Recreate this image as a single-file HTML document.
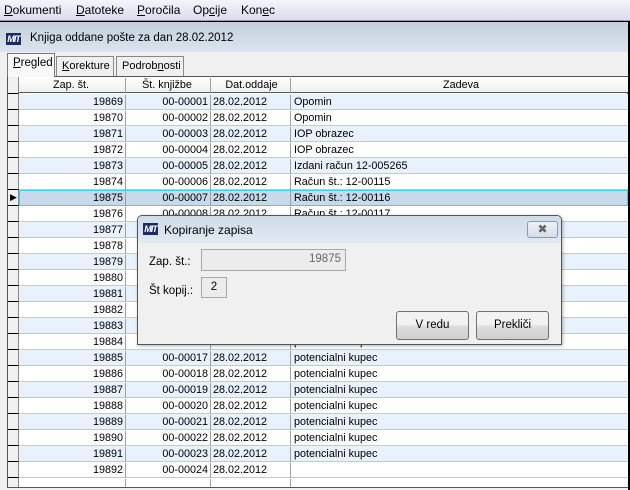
<!DOCTYPE html>
<html><head><meta charset="utf-8"><style>
*{margin:0;padding:0;box-sizing:border-box}
body{width:630px;height:490px;overflow:hidden;background:#000;font-family:"Liberation Sans",sans-serif;font-size:12px;position:relative}
.a{position:absolute}
#menu{left:0;top:0;width:630px;height:21px;background:linear-gradient(#f4f4fb,#dcdcee);border-bottom:1px solid #9a9aaa;color:#000;font-size:12px}
#menu span{position:absolute;top:3px}
#title{left:0;top:22px;width:628px;height:30px;background:linear-gradient(#c2cfdc,#dbe4ee);font-size:11.5px}
#tabs{left:0;top:52px;width:628px;height:438px;background:#f0f0f0}
.tab{position:absolute;height:20px;border:1px solid #888;border-bottom:none;background:#f0f0f0;font-size:11px;padding:3px 5px 0}
.logo{position:absolute;background:#1a2a6a;color:#fff;font-weight:bold;font-style:italic;font-size:9px;line-height:12px;text-align:center;letter-spacing:-1px}
#grid{left:7px;top:76px;width:621px;height:412px;background:#fff;border:1px solid #555}
.row{position:absolute;left:11px;width:609px;height:16px;border-bottom:1px solid #c8c8c8;font-size:10.8px}
.row div{position:absolute;top:1px;height:15px;border-right:1px solid #a0a0a0;white-space:nowrap;line-height:14px}
.c1{left:0;width:107px;text-align:right;padding-right:2px}
.c2{left:107px;width:85px;text-align:right;padding-right:2px}
.c3{left:192px;width:80px;padding-left:2px}
.c4{left:272px;width:337px;padding-left:3px;border-right:none!important}
.ind{position:absolute;left:0;width:11px;height:16px;background:#f0f0f0;border-right:1px solid #888;border-bottom:1px solid #000}
#dlg{left:137px;top:215px;width:425px;height:130px;background:#f0f0f0;border:1px solid #555;border-radius:5px 5px 0 0;box-shadow:1px 1px 3px rgba(0,0,0,.3)}
#dt{left:0;top:0;width:423px;height:27px;background:linear-gradient(#cfdbe8,#e2e9f2);border-radius:4px 4px 0 0;font-size:12px}
.btn{position:absolute;border:1px solid #707070;border-radius:3px;background:linear-gradient(#f2f2f2 45%,#dcdcdc 55%,#cfcfcf);text-align:center;font-size:11.5px;line-height:27px}
</style></head><body>
<div id="menu" class="a"><span style="left:4px"><u>D</u>okumenti</span><span style="left:76px"><u>D</u>atoteke</span><span style="left:137px"><u>P</u>oročila</span><span style="left:193px">Op<u>c</u>ije</span><span style="left:241px">Kon<u>e</u>c</span></div>
<div id="title" class="a"><div class="logo" style="left:6px;top:11px;width:15px;height:12px">MIT</div><span class="a" style="left:30px;top:10px">Knjiga oddane pošte za dan 28.02.2012</span></div>
<div id="tabs" class="a">
<div class="tab" style="left:7px;top:1px;width:48px;height:24px;background:#f8f8f8;z-index:2;border-color:#777;font-size:11.5px"><u>P</u>regled</div>
<div class="tab" style="left:56px;top:4px;width:58px"><u>K</u>orekture</div>
<div class="tab" style="left:116px;top:4px;width:68px">Podrob<u>n</u>osti</div>
</div>
<div id="grid" class="a">
<div class="row" style="top:0;background:linear-gradient(#fff,#f0f0f0);border-bottom:1px solid #555"><div class="c1" style="text-align:center">Zap. št.</div><div class="c2" style="text-align:center">Št. knjižbe</div><div class="c3" style="text-align:center">Dat.oddaje</div><div class="c4" style="text-align:center">Zadeva</div></div>
<div class="ind" style="top:0;height:17px"></div>
</div>
<div id="rows" class="a" style="left:8px;top:94px;width:620px;height:393px;overflow:hidden">
</div>
<script>
var z=["Opomin","Opomin","IOP obrazec","IOP obrazec","Izdani račun 12-005265","Račun št.: 12-00115","Račun št.: 12-00116","Račun št.: 12-00117","","","","","","","","potencialni kupec","potencialni kupec","potencialni kupec","potencialni kupec","potencialni kupec","potencialni kupec","potencialni kupec","potencialni kupec",""];
var h="";
for(var i=0;i<25;i++){
 var t=i*16, bg=(i%2==0&&i<23)?"#e8f1fc":"#fff", ex="";
 if(i==6){bg="#c8d9ec";ex="outline:1px solid #40d0e0;outline-offset:-1px;";}
 var n=i<24?(19869+i):"", k=i<24?("00-000"+(i+1<10?"0":"")+(i+1)):"", d=i<24?"28.02.2012":"";
 h+='<div class="row" style="top:'+t+'px;background:'+bg+';'+ex+'"><div class="c1">'+n+'</div><div class="c2">'+k+'</div><div class="c3">'+d+'</div><div class="c4">'+(z[i]||"")+'</div></div>';
 h+='<div class="ind" style="top:'+t+'px">'+(i==6?'<span style="position:absolute;left:2px;top:2px;font-size:9px">&#9654;</span>':'')+'</div>';
}
document.getElementById("rows").innerHTML=h;
</script>
<div id="dlg" class="a">
<div id="dt" class="a"><div class="logo" style="left:5px;top:7px;width:15px;height:12px">MIT</div><span class="a" style="left:26px;top:7px">Kopiranje zapisa</span>
<div class="a" style="left:389px;top:5px;width:31px;height:17px;border:1px solid #8a9aaa;border-radius:3px;background:linear-gradient(#eef2f6,#d6dee8);text-align:center;font-size:12px;color:#666;line-height:15px">&#x2716;</div></div>
<span class="a" style="left:11px;top:40px;font-size:11.5px">Zap. št.:</span>
<div class="a" style="left:63px;top:33px;width:145px;height:22px;border:1px solid #a8a8a8;background:#ececec;color:#666;text-align:right;padding:3px 4px;font-size:11.5px">19875</div>
<span class="a" style="left:11px;top:69px;font-size:11.5px">Št kopij.:</span>
<div class="a" style="left:63px;top:61px;width:26px;height:21px;border:1px solid #a8a8a8;background:#ececec;text-align:center;padding-top:3px;font-size:11.5px">2</div>
<div class="btn" style="left:258px;top:95px;width:73px;height:29px">V redu</div>
<div class="btn" style="left:338px;top:95px;width:73px;height:29px">Prekliči</div>
</div>
</body></html>
